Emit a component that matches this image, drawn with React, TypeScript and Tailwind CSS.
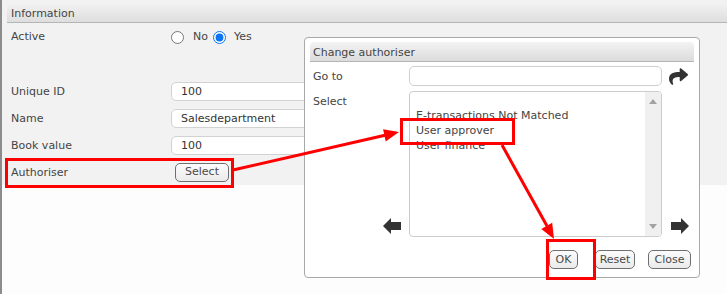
import React from "react";
import { FaShare } from "react-icons/fa";

const font = { fontFamily: '"DejaVu Sans", Verdana, sans-serif' };

function Btn({ children, w }: { children: React.ReactNode; w: string }) {
  return (
    <div
      className={`${w} h-[19px] flex items-center justify-center rounded-[5px] border border-[#6f6f6f] bg-gradient-to-b from-[#fbfbfb] to-[#ebebeb] text-[11px] leading-[14px] text-[#4a4a4a]`}
    >
      {children}
    </div>
  );
}

function BlockArrow({ dir }: { dir: "left" | "right" }) {
  return (
    <svg width="18" height="16" viewBox="0 0 18 16" className={dir === "right" ? "-scale-x-100" : ""}>
      <path d="M0 8 L8 0 L8 4 L18 4 L18 12 L8 12 L8 16 Z" fill="#333" />
    </svg>
  );
}

function Row({ label, children }: { label: string; children: React.ReactNode }) {
  return (
    <div className="h-[27px] flex items-center pl-[4px]">
      <div className="w-[160px] pt-[1px] text-[11px] leading-[14px] text-[#444]">{label}</div>
      {children}
    </div>
  );
}

function TextField({ value }: { value: string }) {
  return (
    <div className="w-[200px] h-[19px] flex items-center rounded-[5px] border border-[#d2d2d2] bg-white pl-[9px] text-[11px] leading-[14px] text-[#333]">
      {value}
    </div>
  );
}

export default function App() {
  return (
    <div className="relative w-[727px] h-[294px] overflow-hidden bg-[#fdfdfd]" style={font}>
      {/* page */}
      <div className="h-full border-l-2 border-[#8c8c8c]">
        <div className="bg-[#f2f2f2] pl-[5px] pt-[4px]">
          <div className="h-[19px] flex items-center pl-[4px] pt-[1px] border-b border-[#b5b5b5] bg-gradient-to-b from-[#f1f1f1] to-[#dedede] text-[11px] leading-[14px] text-[#444]">
            Information
          </div>
          <div className="h-[162px] bg-[#f2f2f2]">
            <div className="h-[55px] flex items-start pl-[4px] pt-[7px]">
              <div className="w-[160px] text-[11px] leading-[14px] text-[#444]">Active</div>
              <div className="flex items-center h-[14px] text-[11px] leading-[14px] text-[#444]">
                <input type="radio" name="active" readOnly className="m-0 w-[13px] h-[13px]" />
                <span className="ml-[9px]">No</span>
                <input type="radio" name="active" readOnly defaultChecked className="m-0 ml-[5px] w-[13px] h-[13px] accent-[#0b74f5]" />
                <span className="ml-[8px]">Yes</span>
              </div>
            </div>
            <Row label="Unique ID">
              <TextField value="100" />
            </Row>
            <Row label="Name">
              <TextField value="Salesdepartment" />
            </Row>
            <Row label="Book value">
              <TextField value="100" />
            </Row>
            <div className="h-[26px] flex items-center pl-[4px]">
              <div className="w-[160px] pt-[1px] text-[11px] leading-[14px] text-[#444]">Authoriser</div>
              <div className="ml-[4px]">
                <Btn w="w-[54px]">Select</Btn>
              </div>
            </div>
          </div>
        </div>
      </div>

      {/* dialog */}
      <div className="absolute left-[304px] top-[37px] w-[396px] h-[241px] rounded-[4px] border border-[#a9a9a9] bg-white px-[5px] pt-[4px]">
        <div className="h-[20px] flex items-center pl-[3px] pt-[3px] rounded-t-[4px] border-b border-[#b5b5b5] bg-gradient-to-b from-[#f3f3f3] to-[#dcdcdc] text-[11px] leading-[14px] text-[#444]">
          Change authoriser
        </div>
        <div className="flex items-center mt-[4px] h-[20px]">
          <div className="w-[99px] pl-[3px] pt-[2px] text-[11px] leading-[14px] text-[#444]">Go to</div>
          <div className="w-[253px] h-[20px] rounded-[5px] border border-[#cfcfcf] bg-white" />
          <div className="ml-[7px] text-[#333]">
            <FaShare size={19} />
          </div>
        </div>
        <div className="flex mt-[5px] h-[146px]">
          <div className="w-[99px] flex flex-col justify-between pl-[3px] pt-[4px] pb-[3px]">
            <div className="text-[11px] leading-[14px] text-[#444]">Select</div>
            <div className="self-end mr-[8px]">
              <BlockArrow dir="left" />
            </div>
          </div>
          <div className="w-[253px] h-[146px] flex rounded-[4px] border border-[#cccccc] bg-white overflow-hidden">
            <div className="flex-1 pl-[6px] pt-[1px] text-[11px] leading-[15px] text-[#444]">
              <div className="h-[15px]" />
              <div>E-transactions Not Matched</div>
              <div>User approver</div>
              <div>User finance</div>
            </div>
            <div className="w-[16px] bg-[#f0f0f0] flex flex-col items-center justify-between pt-[7px] pb-[7px]">
              <svg width="8" height="5" viewBox="0 0 8 5"><path d="M0 5 L4 0 L8 5 Z" fill="#a3a3a3" /></svg>
              <svg width="8" height="5" viewBox="0 0 8 5"><path d="M0 0 L4 5 L8 0 Z" fill="#a3a3a3" /></svg>
            </div>
          </div>
          <div className="ml-[9px] flex flex-col justify-end pb-[3px]">
            <BlockArrow dir="right" />
          </div>
        </div>
        <div className="flex justify-end mt-[13px] pr-[3px]">
          <Btn w="w-[29px]">OK</Btn>
          <div className="ml-[17px]">
            <Btn w="w-[40px]">Reset</Btn>
          </div>
          <div className="ml-[13px]">
            <Btn w="w-[43px]">Close</Btn>
          </div>
        </div>
      </div>

      {/* red annotations */}
      <div className="absolute left-[5px] top-[158px] w-[229px] h-[30px] border-[3px] border-[#ff0000]" />
      <div className="absolute left-[400px] top-[118px] w-[115px] h-[27px] border-[3px] border-[#ff0000]" />
      <div className="absolute left-[546px] top-[239px] w-[50px] h-[41px] border-[3px] border-[#ff0000]" />
      <svg className="absolute left-0 top-0 pointer-events-none" width="727" height="294" viewBox="0 0 727 294">
        <line x1="233" y1="170" x2="385" y2="135.3" stroke="#ff0000" strokeWidth="3" />
        <polygon points="399,132 385.7,141.5 383.1,129.3" fill="#ff0000" />
        <line x1="502" y1="145" x2="547" y2="226" stroke="#ff0000" strokeWidth="3" />
        <polygon points="554,239 552.2,222.8 541.3,228.9" fill="#ff0000" />
      </svg>
    </div>
  );
}
